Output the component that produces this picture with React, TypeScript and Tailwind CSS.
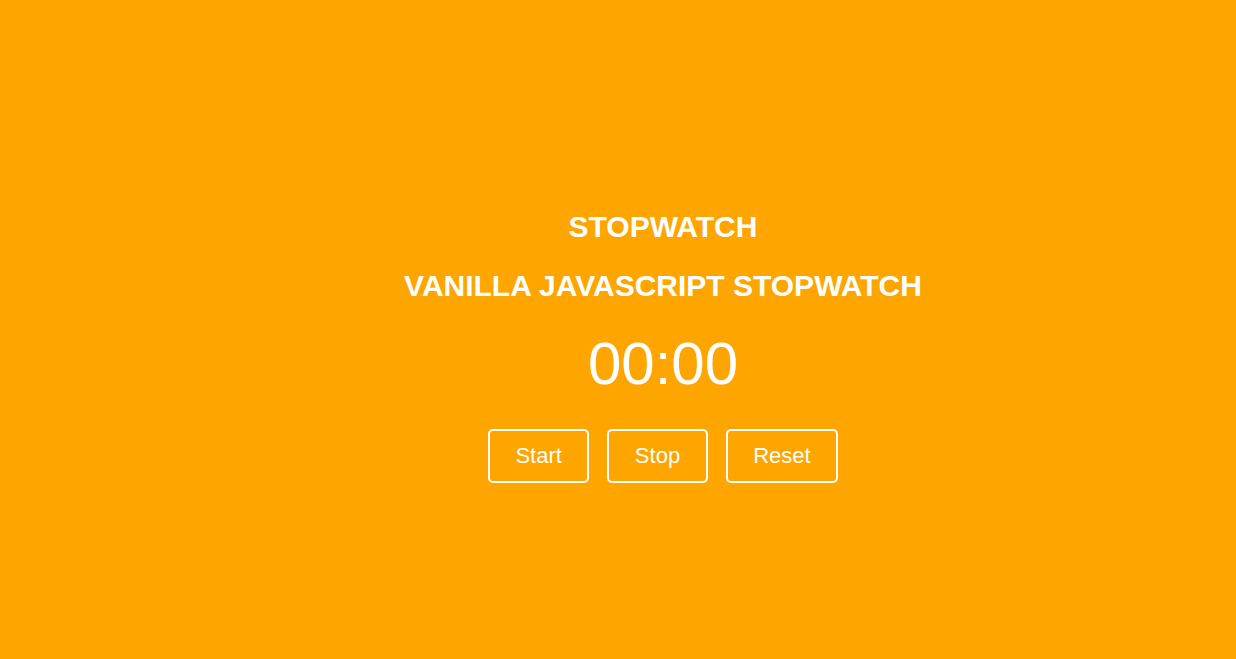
export default function App() {
  return (
    <div className="flex h-[659px] w-full flex-col items-center bg-[#ffa500] pl-[90px] pt-[209px] text-white font-['Liberation_Sans',Arial,sans-serif]">
      <h1 className="text-[30px] font-bold leading-[35px]">STOPWATCH</h1>
      <h2 className="mt-[24px] text-[30px] font-bold leading-[35px]">VANILLA JAVASCRIPT STOPWATCH</h2>
      <p className="mt-[26px] text-[60px] leading-[69px]">00:00</p>
      <div className="mt-[31px] flex gap-[18px]">
        {['Start', 'Stop', 'Reset'].map((label) => (
          <button
            key={label}
            className="rounded-[5px] border-2 border-white px-[25.5px] py-3 text-[22px] leading-[26px] text-white"
          >
            {label}
          </button>
        ))}
      </div>
    </div>
  );
}
